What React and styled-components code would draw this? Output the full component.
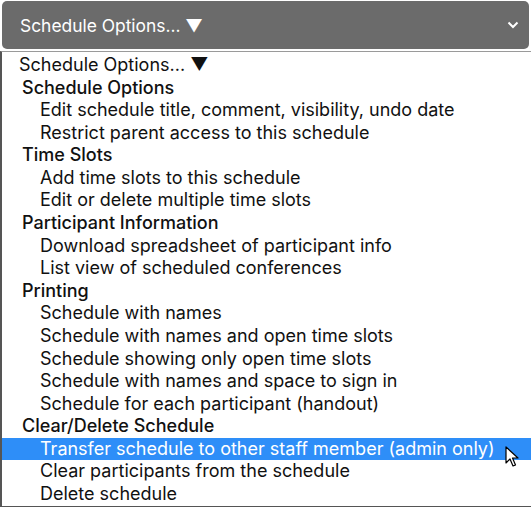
import React from "react";
import styled, { createGlobalStyle } from "styled-components";

const Global = createGlobalStyle`
  html, body { margin: 0; padding: 0; background: #fff; }
  body { font-family: Inter, "Noto Sans", sans-serif; overflow: hidden; }
`;

const Page = styled.div`
  width: 531px;
  height: 507px;
  display: flex;
  flex-direction: column;
  box-sizing: border-box;
`;

const Button = styled.div`
  margin: 1px 2px 0 2px;
  height: 48px;
  background: #6b6b6b;
  border-radius: 5px;
  display: flex;
  align-items: center;
  justify-content: space-between;
  padding: 0 10px 0 18px;
  color: #fff;
  font-size: 17.4px;
  flex-shrink: 0;
`;

const List = styled.div`
  margin-top: 2px;
  flex: 1;
  border-top: 1px solid #9a9a9a;
  border-left: 2px solid #555;
  border-bottom: 2px solid #555;
  display: flex;
  flex-direction: column;
  padding-top: 2px;
  font-size: 18px;
  color: #111;
  position: relative;
`;

const Row = styled.div`
  height: 22.58px;
  line-height: 22.58px;
  white-space: nowrap;
  padding-left: ${p => (p.$level === 0 ? 17 : p.$level === 1 ? 20 : 38)}px;
  font-weight: ${p => (p.$level === 1 ? 500 : 400)};
  background: ${p => (p.$selected ? "#2e8ef8" : "transparent")};
  color: ${p => (p.$selected ? "#fff" : "#111")};
`;

const Cursor = styled.svg`
  position: absolute;
  left: 503px;
  top: 394px;
`;

const groups = [
  ["Schedule Options", ["Edit schedule title, comment, visibility, undo date", "Restrict parent access to this schedule"]],
  ["Time Slots", ["Add time slots to this schedule", "Edit or delete multiple time slots"]],
  ["Participant Information", ["Download spreadsheet of participant info", "List view of scheduled conferences"]],
  ["Printing", ["Schedule with names", "Schedule with names and open time slots", "Schedule showing only open time slots", "Schedule with names and space to sign in", "Schedule for each participant (handout)"]],
  ["Clear/Delete Schedule", ["Transfer schedule to other staff member (admin only)", "Clear participants from the schedule", "Delete schedule"]],
];

export default function App() {
  return (
    <Page>
      <Global />
      <Button>
        <span>Schedule Options... ▼</span>
        <svg width="12" height="8" viewBox="0 0 12 8">
          <path d="M1.5 1.5 L6 6 L10.5 1.5" stroke="#fff" strokeWidth="2" fill="none" />
        </svg>
      </Button>
      <List>
        <Row $level={0}>Schedule Options... ▼</Row>
        {groups.map(([label, opts]) => (
          <React.Fragment key={label}>
            <Row $level={1}>{label}</Row>
            {opts.map(o => (
              <Row key={o} $level={2} $selected={o.startsWith("Transfer")}>{o}</Row>
            ))}
          </React.Fragment>
        ))}
        <Cursor width="14" height="22" viewBox="0 0 14 22">
          <path d="M1 1 L1 17 L5 13 L8 20 L10.5 19 L7.5 12 L13 12 Z" fill="#fff" stroke="#000" strokeWidth="1.2" strokeLinejoin="round" />
        </Cursor>
      </List>
    </Page>
  );
}
